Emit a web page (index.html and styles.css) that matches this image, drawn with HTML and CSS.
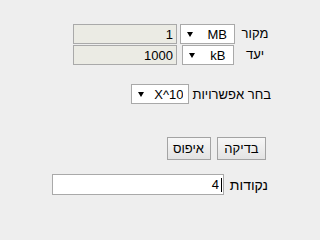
FILE: index.html
```html
<!DOCTYPE html>
<html lang="he">
<head>
<meta charset="utf-8">
<title>המרת יחידות</title>
<link rel="stylesheet" href="styles.css">
</head>
<body>
<div class="page" dir="rtl">
  <div class="units">
    <label class="unit-label">מקור</label>
    <span class="select-wrap unit-select"><select class="select"><option>MB</option></select></span>
    <input class="field field-disabled" type="text" value="1" disabled>

    <label class="unit-label">יעד</label>
    <span class="select-wrap unit-select unit-select-narrow"><select class="select"><option>kB</option></select></span>
    <input class="field field-disabled" type="text" value="1000" disabled>
  </div>

  <div class="option-row">
    <label class="option-label">בחר אפשרויות</label>
    <span class="select-wrap option-select"><select class="select"><option>X^10</option></select></span>
  </div>

  <div class="button-row">
    <button class="btn btn-check" type="button">בדיקה</button>
    <button class="btn btn-reset" type="button">איפוס</button>
  </div>

  <div class="points-row">
    <label class="points-label">נקודות</label>
    <span class="points-box"><input class="field points-field" type="text" value="4"><span class="caret"></span></span>
  </div>
</div>
</body>
</html>
```

FILE: styles.css
```css
html, body {
  margin: 0;
  padding: 0;
  overflow: hidden;
}

body {
  background: #eeeeee;
  font-family: "Liberation Sans", Arial, sans-serif;
  font-size: 13px;
  color: #000;
  direction: ltr;
}

.page {
  direction: rtl;
  width: 272px;
  padding-top: 24px;
}

/* source / target table */
.units {
  display: grid;
  grid-template-columns: 34px 55px 105px;
  grid-auto-rows: 20px;
  column-gap: 3px;
  row-gap: 1px;
  align-items: center;
}

.unit-label {
  display: block;
  text-align: center;
  line-height: 20px;
  justify-self: stretch;
}

.field {
  box-sizing: border-box;
  height: 20px;
  border: 1px solid #a9a9a9;
  background: #fff;
  font-family: "Liberation Sans", Arial, sans-serif;
  font-size: 13px;
  color: #000;
  padding: 0 3px;
  margin: 0;
  direction: rtl;
  text-align: right;
  outline: none;
}

.field-disabled {
  width: 104px;
  background: #ebebe4;
  color: #000;
  -webkit-text-fill-color: #000;
  opacity: 1;
}

.select-wrap {
  position: relative;
  display: inline-block;
}

.select {
  box-sizing: border-box;
  appearance: none;
  -webkit-appearance: none;
  height: 20px;
  width: 100%;
  border: 1px solid #a9a9a9;
  border-radius: 0;
  background: #fff;
  font-family: "Liberation Sans", Arial, sans-serif;
  font-size: 13px;
  color: #000;
  padding: 0 7px 0 20px;
  margin: 0;
  direction: rtl;
  outline: none;
}

.select-wrap::after {
  content: "";
  position: absolute;
  left: 7px;
  top: 8px;
  border-left: 3.5px solid transparent;
  border-right: 3.5px solid transparent;
  border-top: 5px solid #000;
  pointer-events: none;
}

.unit-select {
  width: 55px;
}

.unit-select-narrow {
  width: 52px;
  justify-self: center;
}

/* option row */
.option-row {
  display: flex;
  align-items: center;
  gap: 3px;
  margin-top: 19px;
  padding-right: 1px;
  height: 20px;
}

.option-select {
  width: 58px;
}

.option-select .select {
  padding-right: 5px;
}

/* buttons */
.button-row {
  display: flex;
  gap: 6px;
  margin-top: 33px;
  padding-right: 6px;
}

.btn {
  box-sizing: border-box;
  height: 23px;
  border: 1px solid #a3a3a3;
  border-radius: 0;
  background: linear-gradient(#f7f7f7, #e3e3e3);
  font-family: "Liberation Sans", Arial, sans-serif;
  font-size: 13px;
  color: #000;
  padding: 0 6px;
  margin: 0;
}

.btn-check {
  width: 49px;
}

.btn-reset {
  width: 44px;
}

/* points */
.points-row {
  display: flex;
  align-items: center;
  gap: 4px;
  margin-top: 14px;
  padding-right: 4px;
}

.points-label {
  width: 40px;
  font-size: 14px;
  text-align: right;
}

.points-box {
  position: relative;
  display: inline-block;
}

.points-field {
  width: 172px;
  height: 21px;
  padding-right: 4px;
}

.caret {
  position: absolute;
  right: 2px;
  top: 4px;
  width: 1px;
  height: 14px;
  background: #000;
}
```
